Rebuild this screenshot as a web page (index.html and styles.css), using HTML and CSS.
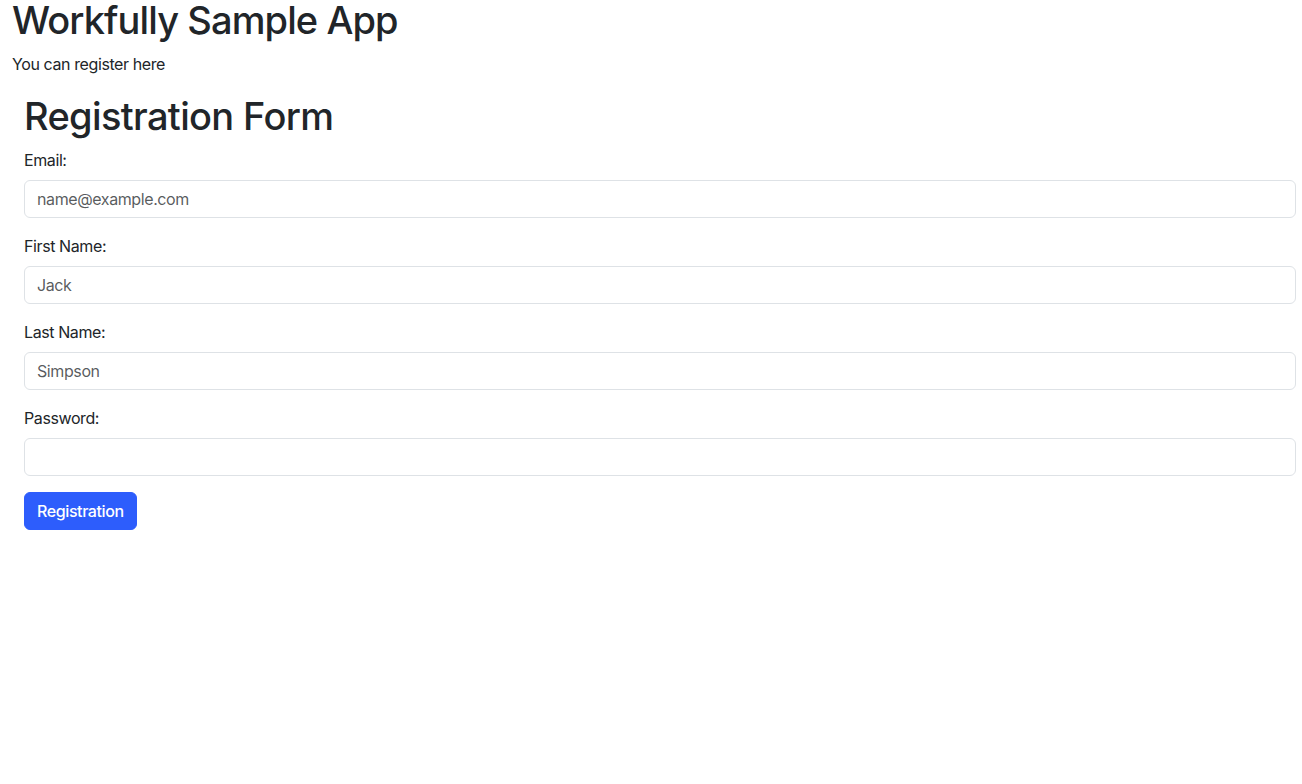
FILE: index.html
```html
<!DOCTYPE html>
<html lang="en">
<head>
<meta charset="utf-8">
<title>Workfully Sample App</title>
<link rel="stylesheet" href="styles.css">
</head>
<body>
<div class="page">
  <h1 class="app-title">Workfully Sample App</h1>
  <p class="intro">You can register here</p>
  <div class="form-wrap">
    <h1 class="form-title">Registration Form</h1>
    <form class="reg-form">
      <div class="field">
        <label class="field-label" for="email">Email:</label>
        <input class="field-input" id="email" type="email" placeholder="name@example.com">
      </div>
      <div class="field">
        <label class="field-label" for="first">First Name:</label>
        <input class="field-input" id="first" type="text" placeholder="Jack">
      </div>
      <div class="field">
        <label class="field-label" for="last">Last Name:</label>
        <input class="field-input" id="last" type="text" placeholder="Simpson">
      </div>
      <div class="field">
        <label class="field-label" for="pw">Password:</label>
        <input class="field-input" id="pw" type="password">
      </div>
      <div class="actions">
        <button class="btn-primary" type="button">Registration</button>
      </div>
    </form>
  </div>
</div>
</body>
</html>
```
FILE: styles.css
```css
* { box-sizing: border-box; }
html, body { margin: 0; padding: 0; background: #fff; }
body {
  font-family: Inter, "Noto Sans", "Liberation Sans", sans-serif;
  font-size: 16px;
  line-height: 24px;
  letter-spacing: -0.4px;
  color: #212529;
}
.page { padding: 0 0 0 12px; }
.app-title {
  margin: 0 0 12px;
  font-size: 38px;
  line-height: 40px;
  font-weight: 500;
  letter-spacing: -0.9px;
}
.intro { margin: 0 0 20px; }
.form-wrap { padding: 0 6px 0 12px; }
.form-title {
  margin: 0 0 12px;
  font-size: 38px;
  line-height: 40px;
  font-weight: 500;
  letter-spacing: -0.65px;
}
.reg-form { display: flex; flex-direction: column; gap: 16px; }
.field { display: flex; flex-direction: column; gap: 8px; }
.field-label { display: block; }
.field-input {
  display: block;
  width: 100%;
  height: 38px;
  padding: 6px 12px;
  font: inherit;
  letter-spacing: inherit;
  color: #212529;
  background: #fff;
  border: 1px solid #dee2e6;
  border-radius: 6px;
  outline: none;
}
.field-input::placeholder { color: rgba(33, 37, 41, 0.75); }
.actions { display: flex; }
.btn-primary {
  height: 38px;
  padding: 6px 12px;
  font: inherit;
  font-weight: 500;
  letter-spacing: inherit;
  color: #fff;
  background: #2d5dfc;
  border: 1px solid #2d5dfc;
  border-radius: 6px;
}
```
